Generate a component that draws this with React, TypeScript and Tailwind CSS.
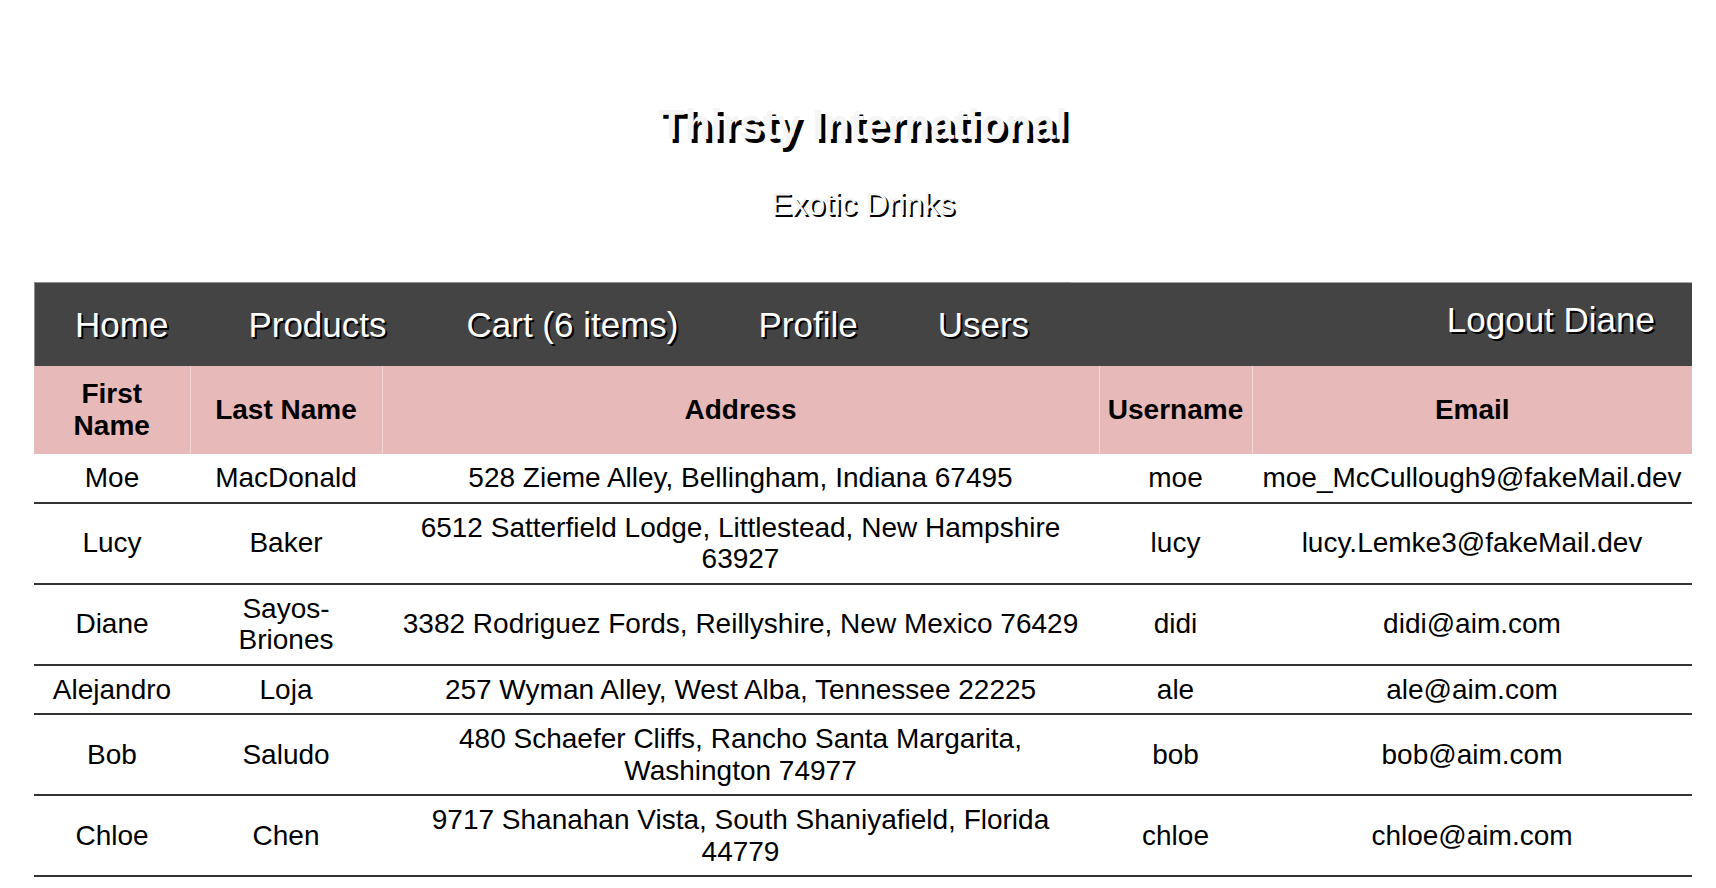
const users = [
  {
    first: "Moe",
    last: "MacDonald",
    address: "528 Zieme Alley, Bellingham, Indiana 67495",
    username: "moe",
    email: "moe_McCullough9@fakeMail.dev",
  },
  {
    first: "Lucy",
    last: "Baker",
    address: "6512 Satterfield Lodge, Littlestead, New Hampshire 63927",
    username: "lucy",
    email: "lucy.Lemke3@fakeMail.dev",
  },
  {
    first: "Diane",
    last: "Sayos-Briones",
    address: "3382 Rodriguez Fords, Reillyshire, New Mexico 76429",
    username: "didi",
    email: "didi@aim.com",
  },
  {
    first: "Alejandro",
    last: "Loja",
    address: "257 Wyman Alley, West Alba, Tennessee 22225",
    username: "ale",
    email: "ale@aim.com",
  },
  {
    first: "Bob",
    last: "Saludo",
    address: "480 Schaefer Cliffs, Rancho Santa Margarita, Washington 74977",
    username: "bob",
    email: "bob@aim.com",
  },
  {
    first: "Chloe",
    last: "Chen",
    address: "9717 Shanahan Vista, South Shaniyafield, Florida 44779",
    username: "chloe",
    email: "chloe@aim.com",
  },
];

export default function App() {
  return (
    <div className="min-h-screen bg-white pl-[34px] pr-[24px] font-['Liberation_Sans',Arial,sans-serif] text-black">
      <header className="pt-[101px] text-center">
        <h1 className="text-[42.5px] leading-[48px] font-bold text-[#f5f5f5] [text-shadow:4px_4px_0_#000]">
          Thirsty International
        </h1>
        <h2 className="mt-[37px] text-[31.5px] leading-[36px] text-[#f5f5f5] [text-shadow:2px_2px_0_#000]">
          Exotic Drinks
        </h2>
      </header>

      <nav className="mt-[60px] flex h-[84px]">
        <ul className="flex w-[1037px] items-center border-t border-l border-[#8c8c8c] bg-[#444444]">
          <NavLink title="Home" />
          <NavLink title="Products" />
          <NavLink title="Cart (6 items)" />
          <NavLink title="Profile" />
          <NavLink title="Users" />
        </ul>
        <div className="flex flex-1 justify-end border-t border-[#a3a3a3] bg-[#444444] pt-[17px] pr-[37px]">
          <a className="text-[35px] leading-[40px] text-white [text-shadow:2px_2px_0_#000]">
            Logout Diane
          </a>
        </div>
      </nav>

      <table className="w-full table-fixed border-collapse text-center">
        <colgroup>
          <col className="w-[156px]" />
          <col className="w-[192px]" />
          <col className="w-[717px]" />
          <col className="w-[153px]" />
          <col />
        </colgroup>
        <thead>
          <tr className="bg-[#e8b9b9]">
            <HeadCell title="First Name" />
            <HeadCell title="Last Name" />
            <HeadCell title="Address" />
            <HeadCell title="Username" />
            <HeadCell title="Email" last />
          </tr>
        </thead>
        <tbody>
          {users.map((u) => (
            <tr key={u.username}>
              <Cell>{u.first}</Cell>
              <Cell>{u.last}</Cell>
              <Cell>{u.address}</Cell>
              <Cell>{u.username}</Cell>
              <Cell>{u.email}</Cell>
            </tr>
          ))}
        </tbody>
      </table>
    </div>
  );
}

function NavLink({ title }: { title: string }) {
  return (
    <li className="px-10">
      <a className="whitespace-nowrap text-[35px] leading-[40px] text-white [text-shadow:2px_2px_0_#000]">
        {title}
      </a>
    </li>
  );
}

function HeadCell({ title, last }: { title: string; last?: boolean }) {
  return (
    <th
      className={`${
        last ? "" : "border-r border-[#f2d5d5]"
      } px-2 py-3 text-[28px] leading-[32px] font-bold`}
    >
      {title}
    </th>
  );
}

function Cell({ children }: { children: React.ReactNode }) {
  return (
    <td className="border-b-2 border-[#333333] px-2 py-2 text-[28px] leading-[31.5px]">
      {children}
    </td>
  );
}
